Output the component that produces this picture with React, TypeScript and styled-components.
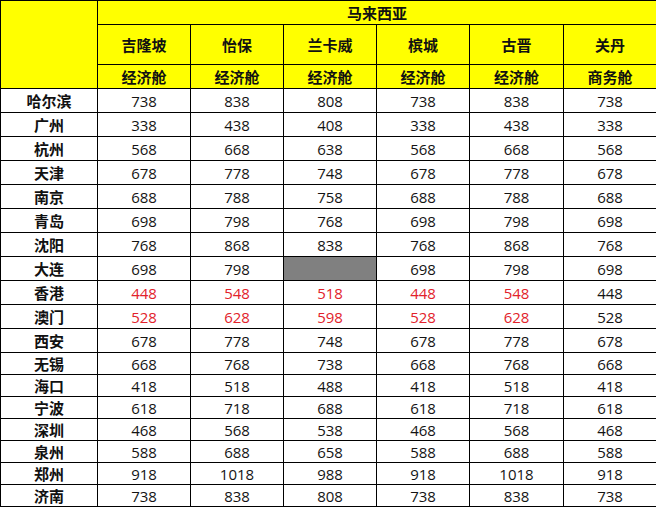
import React from "react";
import styled, { createGlobalStyle } from "styled-components";

const Global = createGlobalStyle`
  html, body { margin: 0; padding: 0; background: #ffffff; }
  body { font-family: "Open Sans", "Noto Sans CJK SC", sans-serif; }
`;

const Table = styled.table`
  width: 656px;
  border-collapse: collapse;
  table-layout: fixed;
  font-family: "Open Sans", "Noto Sans CJK SC", sans-serif;
  font-size: 15px;
  color: #111111;
`;

const Col = styled.col<{ $w: number }>`
  width: ${(p) => p.$w}px;
`;

const Row = styled.tr<{ $h: number }>`
  height: ${(p) => p.$h}px;
`;

const HeadCell = styled.th`
  background: #ffff00;
  border: 1px solid #000000;
  font-family: "Noto Sans CJK SC", sans-serif;
  font-weight: 700;
  font-size: 15px;
  line-height: 18px;
  padding: 0;
  text-align: center;
  vertical-align: middle;
  color: #111111;
`;

const LabelCell = styled.th`
  background: #ffffff;
  border: 1px solid #000000;
  font-family: "Noto Sans CJK SC", sans-serif;
  font-weight: 700;
  font-size: 15px;
  line-height: 18px;
  padding: 0;
  text-align: center;
  vertical-align: middle;
  color: #111111;
`;

const ValueCell = styled.td<{ $red?: boolean; $blank?: boolean }>`
  border: 1px solid #000000;
  background: ${(p) => (p.$blank ? "#808080" : "#ffffff")};
  color: ${(p) => (p.$red ? "#e2222b" : "#141414")};
  font-size: 15px;
  line-height: 18px;
  padding: 0;
  text-align: center;
  vertical-align: middle;
`;

const cities = ["吉隆坡", "怡保", "兰卡威", "槟城", "古晋", "关丹"];
const cabins = ["经济舱", "经济舱", "经济舱", "经济舱", "经济舱", "商务舱"];

type DataRow = { name: string; values: (number | null)[]; red?: boolean };

const rows: DataRow[] = [
  { name: "哈尔滨", values: [738, 838, 808, 738, 838, 738] },
  { name: "广州", values: [338, 438, 408, 338, 438, 338] },
  { name: "杭州", values: [568, 668, 638, 568, 668, 568] },
  { name: "天津", values: [678, 778, 748, 678, 778, 678] },
  { name: "南京", values: [688, 788, 758, 688, 788, 688] },
  { name: "青岛", values: [698, 798, 768, 698, 798, 698] },
  { name: "沈阳", values: [768, 868, 838, 768, 868, 768] },
  { name: "大连", values: [698, 798, null, 698, 798, 698] },
  { name: "香港", values: [448, 548, 518, 448, 548, 448], red: true },
  { name: "澳门", values: [528, 628, 598, 528, 628, 528], red: true },
  { name: "西安", values: [678, 778, 748, 678, 778, 678] },
  { name: "无锡", values: [668, 768, 738, 668, 768, 668] },
  { name: "海口", values: [418, 518, 488, 418, 518, 418] },
  { name: "宁波", values: [618, 718, 688, 618, 718, 618] },
  { name: "深圳", values: [468, 568, 538, 468, 568, 468] },
  { name: "泉州", values: [588, 688, 658, 588, 688, 588] },
  { name: "郑州", values: [918, 1018, 988, 918, 1018, 918] },
  { name: "济南", values: [738, 838, 808, 738, 838, 738] },
];

const colWidths = [97, 93, 93, 93, 93, 94, 93];

export default function App() {
  return (
    <>
      <Global />
      <Table>
        <colgroup>
          {colWidths.map((w, i) => (
            <Col key={i} $w={w} />
          ))}
        </colgroup>
        <thead>
          <Row $h={24}>
            <HeadCell rowSpan={3} />
            <HeadCell colSpan={6}>马来西亚</HeadCell>
          </Row>
          <Row $h={40}>
            {cities.map((c) => (
              <HeadCell key={c}>{c}</HeadCell>
            ))}
          </Row>
          <Row $h={24}>
            {cabins.map((c, i) => (
              <HeadCell key={i}>{c}</HeadCell>
            ))}
          </Row>
        </thead>
        <tbody>
          {rows.map((r, ri) => (
            <Row key={r.name} $h={ri < 11 ? 24 : 22}>
              <LabelCell>{r.name}</LabelCell>
              {r.values.map((v, i) => (
                <ValueCell key={i} $blank={v === null} $red={r.red && i < 5}>
                  {v === null ? "" : v}
                </ValueCell>
              ))}
            </Row>
          ))}
        </tbody>
      </Table>
    </>
  );
}
